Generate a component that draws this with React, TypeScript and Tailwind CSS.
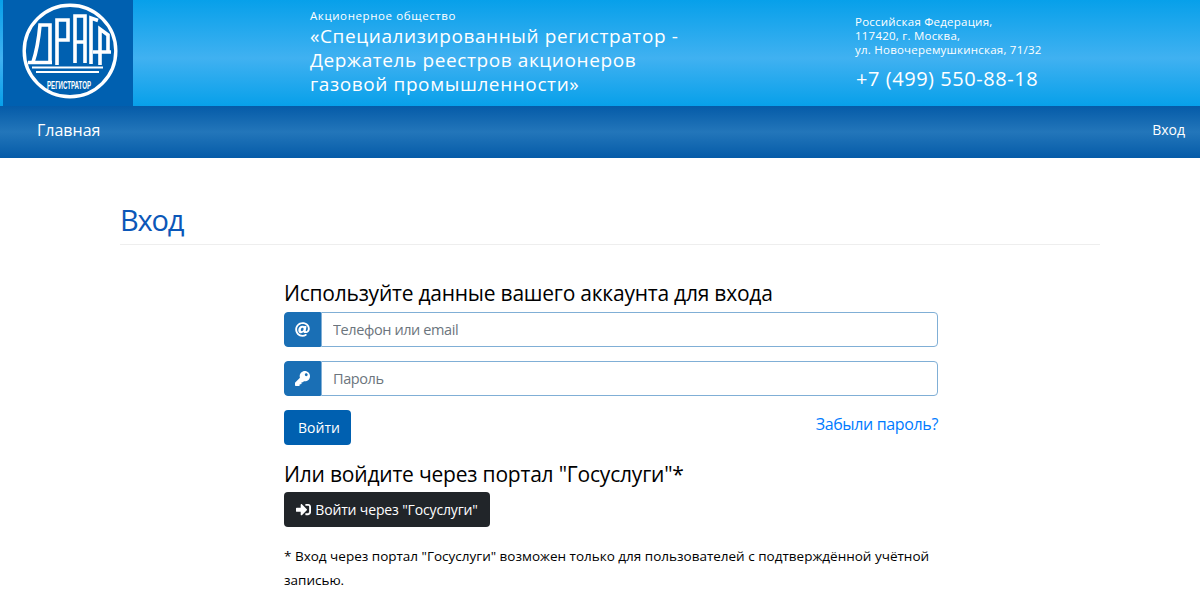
import { FaAt, FaKey, FaSignInAlt } from "react-icons/fa";

function Logo() {
  return (
    <svg width="98" height="98" viewBox="0 0 98 98" className="block">
      <circle cx="49" cy="49" r="45.8" fill="none" stroke="#fff" strokeWidth="3.4" />
      <g fill="none" stroke="#fff" strokeWidth="3.6">
        <path d="M7 60.5 H31 M12 60 C16 48 18 34 19 23 H29 V61" />
        <path d="M36 63 V18 H47 V38 H37" />
        <path d="M54 61 V14 H64 V61 M54 40 H64" />
        <path d="M70 62 V16 L77 18.5" />
        <path d="M79 63 V27 L87 33 V50 M72 50 H90" />
      </g>
      <path d="M11 65.5 H82 M15 70 H78" stroke="#fff" strokeWidth="2" fill="none" />
      <text x="48" y="86.5" textAnchor="middle" fill="#fff" fontSize="10" fontWeight="700" fontFamily="'Liberation Sans',sans-serif" textLength="44" lengthAdjust="spacingAndGlyphs">РЕГИСТРАТОР</text>
    </svg>
  );
}

export default function App() {
  return (
    <div className="min-h-[593px] overflow-hidden bg-white font-['Open_Sans','Noto_Sans',sans-serif] text-[#212529]">
      <header className="flex h-[106px] bg-[linear-gradient(#07a0ea,#40b1f1_55%,#07a0ea)] text-white">
        <div className="ml-[3px] flex h-[106px] w-[130px] shrink-0 items-center justify-center bg-[#0060b0] pb-[4px] pl-[4px]">
          <Logo />
        </div>
        <div className="ml-[177px] w-[400px] pt-[8px] tracking-[0.6px]">
          <div className="text-[11.5px] leading-[16px]">Акционерное общество</div>
          <div className="text-[19px] leading-[24px]">
            «Специализированный регистратор -<br />
            Держатель реестров акционеров<br />
            газовой промышленности»
          </div>
        </div>
        <div className="ml-[145px] pt-[15px] tracking-[0.23px]">
          <div className="text-[11.5px] leading-[14px]">
            Российская Федерация,<br />
            117420, г. Москва,<br />
            ул. Новочеремушкинская, 71/32
          </div>
          <div className="ml-[1px] mt-[9px] text-[20px] leading-[26px] tracking-[0.55px]">+7 (499) 550-88-18</div>
        </div>
      </header>
      <nav className="flex h-[52px] items-center justify-between bg-[linear-gradient(#055ba8,#2376ba_50%,#055ba8)] pb-[4px] pl-[37px] pr-[15px] text-white">
        <a className="text-[16px]">Главная</a>
        <a className="pb-[2px] text-[14px]">Вход</a>
      </nav>
      <main className="ml-[120px] w-[980px] pt-[44px]">
        <h1 className="border-b border-[#eeeeee] pb-[6px] text-[29px] leading-[36px] tracking-[-1.2px] text-[#0b57b8]">Вход</h1>
        <div className="ml-[164px] w-[654px] pt-[33px]">
          <h2 className="text-[21px] leading-[30px] tracking-[-0.23px] text-black">Используйте данные вашего аккаунта для входа</h2>
          <div className="mt-[4px] flex h-[35px]">
            <span className="flex w-[37px] items-center justify-center rounded-l-[4px] border border-[#1a6fb5] bg-[#1a6fb5] text-white"><FaAt size={15} /></span>
            <input readOnly placeholder="Телефон или email" className="min-w-0 flex-1 rounded-r-[4px] border border-[#80afd6] px-[11px] text-[14.5px] tracking-[-0.4px] outline-none placeholder:text-[#6c757d]" />
          </div>
          <div className="mt-[14px] flex h-[35px]">
            <span className="flex w-[37px] items-center justify-center rounded-l-[4px] border border-[#1a6fb5] bg-[#1a6fb5] text-white"><FaKey size={15} /></span>
            <input readOnly placeholder="Пароль" className="min-w-0 flex-1 rounded-r-[4px] border border-[#80afd6] px-[11px] text-[14.5px] tracking-[-0.4px] outline-none placeholder:text-[#6c757d]" />
          </div>
          <div className="mt-[14px] flex items-center justify-between">
            <button className="h-[35px] w-[67px] rounded-[4px] bg-[#0060b0] pl-[3px] text-[14px] text-white">Войти</button>
            <a className="pb-[8px] text-[16px] tracking-[-0.35px] text-[#007bff]">Забыли пароль?</a>
          </div>
          <h2 className="mt-[14px] text-[21px] leading-[30px] tracking-[-0.2px] text-black">Или войдите через портал "Госуслуги"*</h2>
          <button className="mt-[3px] flex h-[35px] w-[206px] items-center justify-center gap-[4px] rounded-[4px] bg-[#212529] text-[14px] tracking-[-0.15px] text-white"><FaSignInAlt size={15} />Войти через "Госуслуги"</button>
          <p className="mt-[17px] text-[13.5px] leading-[24px] text-black">* Вход через портал "Госуслуги" возможен только для пользователей с подтверждённой учётной записью.</p>
        </div>
      </main>
    </div>
  );
}
